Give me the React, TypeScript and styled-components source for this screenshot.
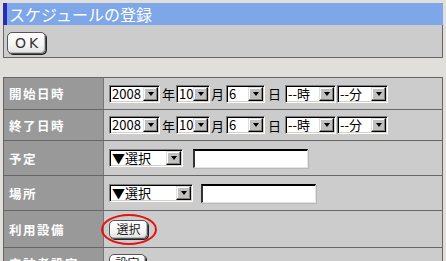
import React from "react";
import styled, { createGlobalStyle } from "styled-components";

const GlobalStyle = createGlobalStyle`
  html, body { margin: 0; padding: 0; }
  body {
    margin: 3px;
    background: #e0dfdc;
    font-family: "Noto Sans CJK JP", "DejaVu Sans", sans-serif;
    overflow: hidden;
  }
`;

const TitleBar = styled.div`
  height: 22px;
  background: #7ea7e9;
  border-left: 4px solid #2b2bb8;
  color: #ffffff;
  font-size: 16px;
  line-height: 22px;
  padding-left: 2px;
`;

const ButtonPanel = styled.div`
  background: #cccccc;
  border: 1px solid #666666;
  border-top: none;
  padding: 4px 3px;
  box-sizing: border-box;
  height: 33px;
`;

const PushButton = styled.button<{ $w: number; $h: number }>`
  width: ${(p) => p.$w}px;
  height: ${(p) => p.$h}px;
  padding: 0;
  margin: 0;
  border: 1px solid #555;
  border-radius: 5px;
  background: linear-gradient(#ffffff, #f4f4f4 60%, #e2e2e2);
  box-shadow: 1px 1px 0 #222, inset -1px -1px 0 #bbb;
  font-family: "Noto Sans CJK JP", sans-serif;
  font-size: 12px;
  color: #222;
  line-height: 1;
  display: inline-flex;
  align-items: center;
  justify-content: center;
`;

const OkLabel = styled.span`
  font-family: "DejaVu Sans", sans-serif;
  font-size: 14px;
  letter-spacing: 3px;
  padding-left: 3px;
  color: #333;
`;

const FormTable = styled.div`
  margin-top: 19px;
  border: 1px solid #666666;
  background: #cccccc;
  display: flex;
  flex-direction: column;
`;

const Row = styled.div<{ $h: number }>`
  display: flex;
  height: ${(p) => p.$h}px;
  border-bottom: 1px solid #666666;
  &:last-child { border-bottom: none; }
`;

const LabelCell = styled.div`
  width: 100px;
  flex: none;
  background: #999999;
  border-right: 1px solid #777777;
  color: #ffffff;
  font-weight: bold;
  font-size: 12.5px;
  letter-spacing: 1.5px;
  display: flex;
  align-items: center;
  padding-left: 5px;
  box-sizing: border-box;
`;

const ValueCell = styled.div`
  flex: 1;
  display: flex;
  align-items: center;
  padding-left: 5px;
`;

const SelectBox = styled.div<{ $w: number; $ml?: number }>`
  width: ${(p) => p.$w}px;
  height: 18px;
  margin-left: ${(p) => p.$ml ?? 0}px;
  box-sizing: border-box;
  display: flex;
  background: #ffffff;
  border-top: 1px solid #808080;
  border-left: 1px solid #808080;
  border-right: 1px solid #ffffff;
  border-bottom: 1px solid #ffffff;
  box-shadow: inset 1px 1px 0 #000000, inset -1px -1px 0 #d4d0c8;
  flex: none;
`;

const SelectText = styled.div`
  flex: 1;
  font-size: 13px;
  line-height: 16px;
  color: #000;
  padding-left: 2px;
  white-space: nowrap;
`;

const ArrowButton = styled.div`
  width: 15px;
  margin: 1px 1px 1px 0;
  flex: none;
  background: #c0c0c0;
  box-sizing: border-box;
  border-top: 1px solid #dfdfdf;
  border-left: 1px solid #dfdfdf;
  border-right: 1px solid #000;
  border-bottom: 1px solid #000;
  box-shadow: inset -1px -1px 0 #808080, inset 1px 1px 0 #ffffff;
  display: flex;
  align-items: center;
  justify-content: center;
  &::after {
    content: "";
    border-left: 3.5px solid transparent;
    border-right: 3.5px solid transparent;
    border-top: 4px solid #000;
  }
`;

const Unit = styled.span<{ $ml: number; $mr: number }>`
  font-size: 13px;
  color: #000;
  margin-left: ${(p) => p.$ml}px;
  margin-right: ${(p) => p.$mr}px;
`;

const TextBox = styled.div<{ $ml: number }>`
  width: 115px;
  height: 19px;
  margin-left: ${(p) => p.$ml}px;
  box-sizing: border-box;
  background: #fff;
  border-top: 2px solid #000;
  border-left: 2px solid #333;
  border-right: 1px solid #e4e4e4;
  border-bottom: 1px solid #e4e4e4;
  box-shadow: 1px 1px 0 #b8b8b8;
  flex: none;
`;

const Marked = styled.div`
  position: relative;
  display: inline-flex;
`;

const RedEllipse = styled.div`
  position: absolute;
  left: -8px;
  right: -9px;
  top: -6px;
  bottom: -6px;
  border: 2.5px solid #e81010;
  border-radius: 50%;
  pointer-events: none;
`;

function Select({ w, text, ml }: { w: number; text: string; ml?: number }) {
  return (
    <SelectBox $w={w} $ml={ml}>
      <SelectText>{text}</SelectText>
      <ArrowButton />
    </SelectBox>
  );
}

function DateFields() {
  return (
    <>
      <Select w={51} text="2008" />
      <Unit $ml={2} $mr={1}>年</Unit>
      <Select w={34} text="10" />
      <Unit $ml={1} $mr={2}>月</Unit>
      <Select w={39} text="6" />
      <Unit $ml={3} $mr={4}>日</Unit>
      <Select w={51} text="--時" />
      <Select w={51} text="--分" ml={1} />
    </>
  );
}

export default function App() {
  return (
    <>
      <GlobalStyle />
      <TitleBar>スケジュールの登録</TitleBar>
      <ButtonPanel>
        <PushButton $w={39} $h={22}>
          <OkLabel>OK</OkLabel>
        </PushButton>
      </ButtonPanel>
      <FormTable>
        <Row $h={31}>
          <LabelCell>開始日時</LabelCell>
          <ValueCell>
            <DateFields />
          </ValueCell>
        </Row>
        <Row $h={30}>
          <LabelCell>終了日時</LabelCell>
          <ValueCell>
            <DateFields />
          </ValueCell>
        </Row>
        <Row $h={34}>
          <LabelCell>予定</LabelCell>
          <ValueCell>
            <Select w={74} text="▼選択" />
            <TextBox $ml={10} />
          </ValueCell>
        </Row>
        <Row $h={34}>
          <LabelCell>場所</LabelCell>
          <ValueCell>
            <Select w={84} text="▼選択" />
            <TextBox $ml={8} />
          </ValueCell>
        </Row>
        <Row $h={36}>
          <LabelCell>利用設備</LabelCell>
          <ValueCell>
            <Marked>
              <PushButton $w={39} $h={19}>選択</PushButton>
              <RedEllipse />
            </Marked>
          </ValueCell>
        </Row>
        <Row $h={30}>
          <LabelCell>来訪者設定</LabelCell>
          <ValueCell>
            <PushButton $w={37} $h={19}>設定</PushButton>
          </ValueCell>
        </Row>
      </FormTable>
    </>
  );
}
